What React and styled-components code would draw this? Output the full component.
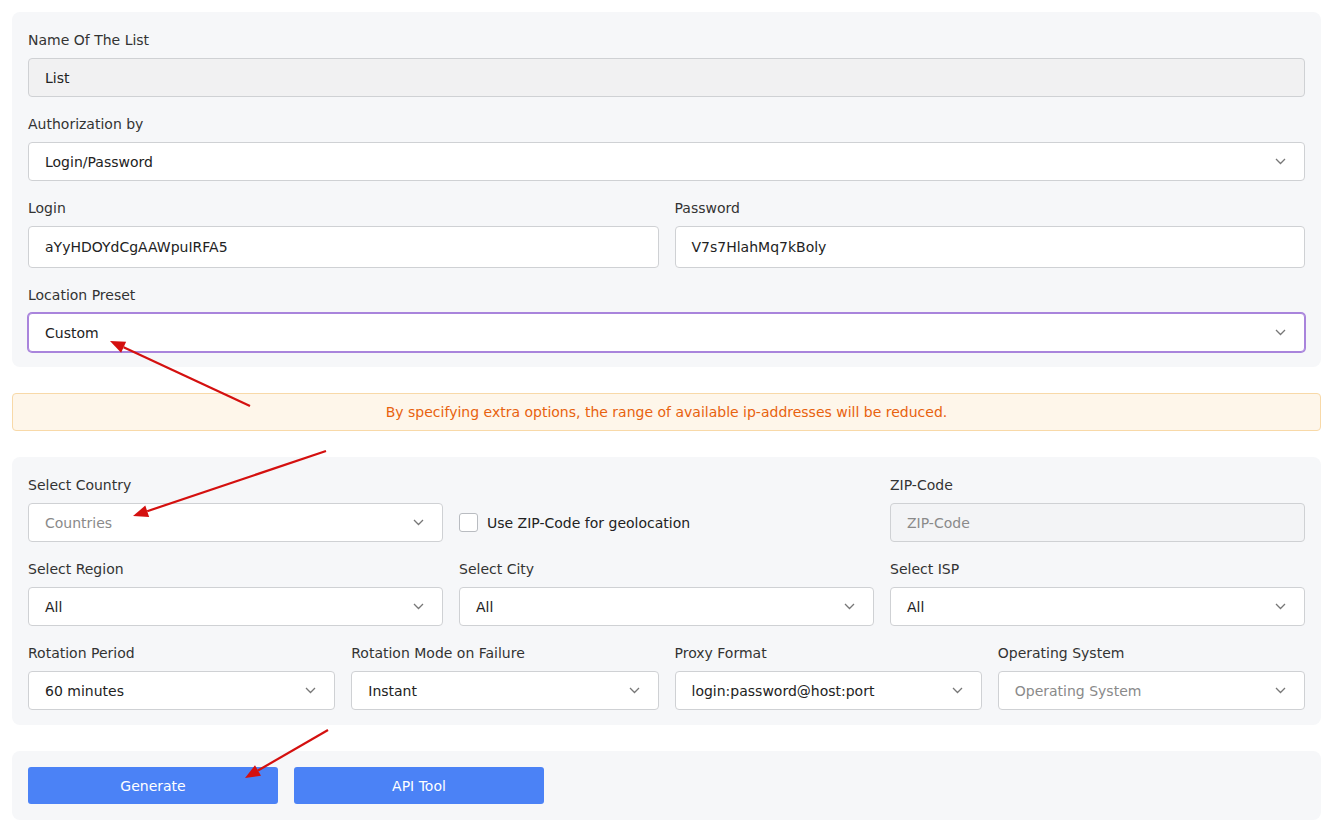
import React from 'react';
import styled, { createGlobalStyle } from 'styled-components';

const GlobalStyle = createGlobalStyle`
  html, body {
    margin: 0;
    padding: 0;
    background: #ffffff;
    font-family: "DejaVu Sans", Verdana, sans-serif;
    font-size: 14px;
    color: #222;
  }
  * { box-sizing: border-box; }
`;

const Page = styled.div`
  position: relative;
  width: 1335px;
  padding: 12px 14px 12px 12px;
  display: flex;
  flex-direction: column;
  gap: 26px;
`;

const Panel = styled.section`
  background: #f6f7f9;
  border-radius: 8px;
  padding: 16px 16px 15px;
  display: flex;
  flex-direction: column;
  gap: 15px;
`;

const Row = styled.div`
  display: grid;
  grid-template-columns: repeat(${p => p.$cols || 1}, 1fr);
  column-gap: 16px;
  align-items: end;
`;

const Field = styled.div`
  display: flex;
  flex-direction: column;
  gap: 9px;
  min-width: 0;
`;

const Label = styled.label`
  padding-top: 3px;
  line-height: 18px;
  color: #333;
  font-size: 14px;
`;

const Box = styled.div`
  height: ${p => p.$h || 39}px;
  display: flex;
  align-items: center;
  justify-content: space-between;
  padding: 0 18px 0 16px;
  background: ${p => p.$bg || '#fff'};
  border: 1px solid ${p => (p.$focus ? '#a984dc' : '#cfd1d4')};
  box-shadow: ${p => (p.$focus ? '0 0 0 1px #a984dc' : 'none')};
  border-radius: 4px;
  color: ${p => (p.$placeholder ? '#8a8a8a' : '#222')};
  white-space: nowrap;
  overflow: hidden;
`;

const CheckWrap = styled.div`
  height: 39px;
  display: flex;
  align-items: center;
  gap: 9px;
  color: #222;
`;

const Check = styled.span`
  width: 19px;
  height: 19px;
  border: 1px solid #b9bcc1;
  border-radius: 3px;
  background: #fff;
`;

const Notice = styled.div`
  height: 38px;
  display: flex;
  align-items: center;
  justify-content: center;
  background: #fef6ea;
  border: 1px solid #f8d9a8;
  border-radius: 4px;
  color: #e8620e;
  font-size: 14px;
`;

const Buttons = styled.div`
  display: flex;
  gap: 16px;
  padding-bottom: 1px;
`;

const Button = styled.button`
  width: 250px;
  height: 37px;
  border: none;
  border-radius: 3px;
  background: #4b82f6;
  color: #fff;
  font-family: inherit;
  font-size: 14px;
`;

const Overlay = styled.svg`
  position: absolute;
  left: 0;
  top: 0;
  pointer-events: none;
`;

const Chevron = () => (
  <svg width="11" height="7" viewBox="0 0 11 7" fill="none">
    <path d="M1 1l4.5 4.5L10 1" stroke="#777" strokeWidth="1.3" />
  </svg>
);

const Select = ({ value, placeholder, focus }) => (
  <Box $focus={focus} $placeholder={!!placeholder}>
    <span>{value || placeholder}</span>
    <Chevron />
  </Box>
);

const arrows = [
  [250, 406, 110, 341],
  [326, 451, 133, 516],
  [328, 730, 245, 778],
];

function Arrow({ x1, y1, x2, y2 }) {
  const a = Math.atan2(y2 - y1, x2 - x1);
  const len = 15;
  const w = 6;
  const bx = x2 - len * Math.cos(a);
  const by = y2 - len * Math.sin(a);
  const px = -Math.sin(a) * w;
  const py = Math.cos(a) * w;
  return (
    <g>
      <line x1={x1} y1={y1} x2={bx} y2={by} stroke="#d4100f" strokeWidth="2.2" />
      <polygon points={`${x2},${y2} ${bx + px},${by + py} ${bx - px},${by - py}`} fill="#d4100f" />
    </g>
  );
}

export default function App() {
  return (
    <>
      <GlobalStyle />
      <Page>
        <Panel>
          <Field>
            <Label>Name Of The List</Label>
            <Box $bg="#f1f1f2">List</Box>
          </Field>
          <Field>
            <Label>Authorization by</Label>
            <Select value="Login/Password" />
          </Field>
          <Row $cols={2}>
            <Field>
              <Label>Login</Label>
              <Box $h={42}>aYyHDOYdCgAAWpuIRFA5</Box>
            </Field>
            <Field>
              <Label>Password</Label>
              <Box $h={42}>V7s7HlahMq7kBoly</Box>
            </Field>
          </Row>
          <Field>
            <Label>Location Preset</Label>
            <Select value="Custom" focus />
          </Field>
        </Panel>

        <Notice>By specifying extra options, the range of available ip-addresses will be reduced.</Notice>

        <Panel>
          <Row $cols={3}>
            <Field>
              <Label>Select Country</Label>
              <Select placeholder="Countries" />
            </Field>
            <CheckWrap>
              <Check />
              Use ZIP-Code for geolocation
            </CheckWrap>
            <Field>
              <Label>ZIP-Code</Label>
              <Box $bg="#f3f4f6" $placeholder>ZIP-Code</Box>
            </Field>
          </Row>
          <Row $cols={3}>
            <Field>
              <Label>Select Region</Label>
              <Select value="All" />
            </Field>
            <Field>
              <Label>Select City</Label>
              <Select value="All" />
            </Field>
            <Field>
              <Label>Select ISP</Label>
              <Select value="All" />
            </Field>
          </Row>
          <Row $cols={4}>
            <Field>
              <Label>Rotation Period</Label>
              <Select value="60 minutes" />
            </Field>
            <Field>
              <Label>Rotation Mode on Failure</Label>
              <Select value="Instant" />
            </Field>
            <Field>
              <Label>Proxy Format</Label>
              <Select value="login:password@host:port" />
            </Field>
            <Field>
              <Label>Operating System</Label>
              <Select placeholder="Operating System" />
            </Field>
          </Row>
        </Panel>

        <Panel>
          <Buttons>
            <Button>Generate</Button>
            <Button>API Tool</Button>
          </Buttons>
        </Panel>

        <Overlay width="1335" height="830">
          {arrows.map(([x1, y1, x2, y2], i) => (
            <Arrow key={i} x1={x1} y1={y1} x2={x2} y2={y2} />
          ))}
        </Overlay>
      </Page>
    </>
  );
}
